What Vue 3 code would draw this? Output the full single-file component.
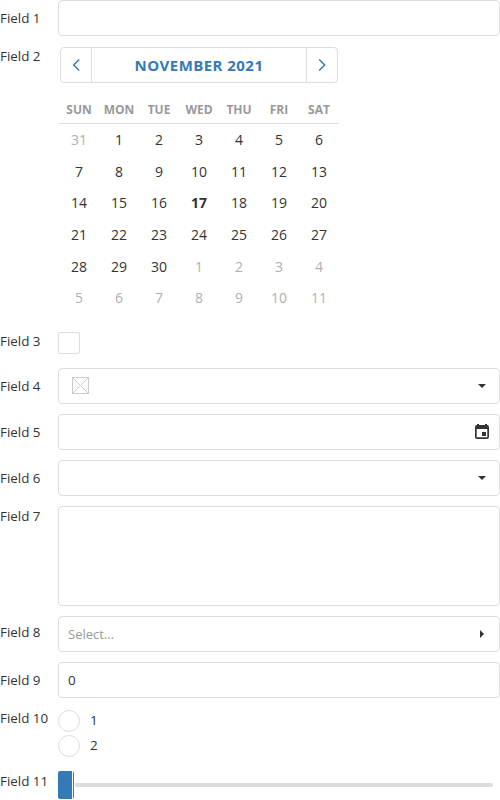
<script setup>
const weekdays = ['SUN', 'MON', 'TUE', 'WED', 'THU', 'FRI', 'SAT']
const days = [
  { n: 31, other: true },
  ...Array.from({ length: 30 }, (_, i) => ({ n: i + 1, other: false })),
  ...Array.from({ length: 11 }, (_, i) => ({ n: i + 1, other: true })),
]
</script>

<template>
  <form class="form" @submit.prevent>
    <div class="row">
      <label class="label">Field 1</label>
      <div class="box"></div>
    </div>

    <div class="row row-calendar">
      <label class="label">Field 2</label>
      <div class="calendar">
        <div class="nav">
          <button type="button" class="nav-button">
            <svg width="30" height="34" viewBox="0 0 30 34"><path d="M18.2 11.5 12.7 17l5.5 5.5" /></svg>
          </button>
          <div class="caption">NOVEMBER 2021</div>
          <button type="button" class="nav-button">
            <svg width="30" height="34" viewBox="0 0 30 34"><path d="M12.2 11.5l5.5 5.5-5.5 5.5" /></svg>
          </button>
        </div>
        <div class="weekdays">
          <span v-for="d in weekdays" :key="d">{{ d }}</span>
        </div>
        <div class="days">
          <span v-for="(d, i) in days" :key="i" :class="{ other: d.other, today: !d.other && d.n === 17 }">{{ d.n }}</span>
        </div>
      </div>
    </div>

    <div class="row row-check">
      <label class="label">Field 3</label>
      <div class="checkbox"></div>
    </div>

    <div class="row">
      <label class="label">Field 4</label>
      <div class="box">
        <svg class="no-color" width="17" height="17" viewBox="0 0 17 17"><path d="M1 1l15 15M16 1L1 16" /><rect x="0.5" y="0.5" width="16" height="16" /></svg>
        <svg class="arrow" width="10" height="6" viewBox="0 0 10 6"><path d="M1 1h8L5 5z" /></svg>
      </div>
    </div>

    <div class="row">
      <label class="label">Field 5</label>
      <div class="box box-date">
        <svg width="14" height="16" viewBox="0 0 14 16"><path fill-rule="evenodd" d="M2 0h2v1h6V0h2v1q2 0 2 2v10q0 2-2 2H2q-2 0-2-2V3q0-2 2-2zM1.7 5v8.3h10.6V5zM7 8h4v4H7z" /></svg>
      </div>
    </div>

    <div class="row">
      <label class="label">Field 6</label>
      <div class="box">
        <svg class="arrow" width="10" height="6" viewBox="0 0 10 6"><path d="M1 1h8L5 5z" /></svg>
      </div>
    </div>

    <div class="row row-area">
      <label class="label">Field 7</label>
      <div class="box"></div>
    </div>

    <div class="row row-lookup">
      <label class="label">Field 8</label>
      <div class="box">
        <span class="placeholder">Select...</span>
        <svg class="arrow arrow-right" width="6" height="10" viewBox="0 0 6 10"><path d="M1 1v8l4-4z" /></svg>
      </div>
    </div>

    <div class="row">
      <label class="label">Field 9</label>
      <div class="box"><span class="value">0</span></div>
    </div>

    <div class="row row-radio">
      <label class="label">Field 10</label>
      <div class="radios">
        <div v-for="n in 2" :key="n" class="radio"><i class="circle"></i><span class="value">{{ n }}</span></div>
      </div>
    </div>

    <div class="row row-slider">
      <label class="label">Field 11</label>
      <div class="slider">
        <div class="handle"></div>
        <div class="track"></div>
      </div>
    </div>
  </form>
</template>

<style>
body {
  background: #fff;
  overflow: hidden;
}
</style>

<style scoped>
.form {
  width: 500px;
  height: 800px;
  overflow: hidden;
  font: 13px/20px "Segoe UI", "Open Sans", "Noto Sans", sans-serif;
  color: #333;
}
.form * {
  box-sizing: border-box;
}
.row {
  display: flex;
  align-items: flex-start;
  height: 36px;
  margin-bottom: 10px;
}
.label {
  flex: 0 0 58px;
  padding-top: 8px;
  white-space: nowrap;
  font-size: 13.4px;
}
.value {
  font-size: 13.5px;
}
.box {
  flex: 1;
  display: flex;
  align-items: center;
  height: 100%;
  padding: 0 12px 0 9px;
  border: 1px solid #ddd;
  border-radius: 4px;
}
.row-calendar {
  height: 275px;
}
.row-calendar .label,
.row-area .label {
  padding-top: 0;
}
.calendar {
  width: 282px;
  padding-top: 1px;
}
.nav {
  display: flex;
  width: 278px;
  height: 36px;
  margin-left: 2px;
  border: 1px solid #ddd;
  border-radius: 4px;
}
.nav-button {
  width: 31px;
  padding: 0;
  border: 0;
  border-right: 1px solid #ddd;
  background: none;
}
.nav-button:last-child {
  border-right: 0;
  border-left: 1px solid #ddd;
}
.nav-button svg {
  display: block;
  fill: none;
  stroke: #337ab7;
  stroke-width: 1.5;
}
.caption {
  flex: 1;
  text-align: center;
  font-size: 15px;
  letter-spacing: 0.45px;
  font-weight: 700;
  line-height: 35px;
  color: #337ab7;
}
.weekdays {
  display: grid;
  grid-template-columns: repeat(7, 40px);
  width: 280px;
  margin-left: 1px;
  height: 41px;
  padding-top: 17px;
  border-bottom: 1px solid #ddd;
  text-align: center;
  font-size: 12px;
  font-weight: 700;
  color: #999;
}
.days {
  display: grid;
  grid-template-columns: repeat(7, 40px);
  grid-auto-rows: 31.67px;
  margin-left: 1px;
  text-align: center;
  font-size: 14px;
  line-height: 32px;
}
.other {
  color: #b0b0b0;
}
.today {
  font-weight: 700;
}
.row-check {
  height: 27px;
}
.row-check .label {
  padding-top: 0;
}
.checkbox {
  width: 22px;
  height: 22px;
  margin-top: 1px;
  border: 1px solid #ddd;
  border-radius: 2px;
}
.no-color {
  margin: 0 0 1px 4px;
  fill: none;
  stroke: #ccc;
}
.arrow {
  margin-left: auto;
  fill: #333;
}
.arrow-right {
  margin-right: 2px;
}
.box-date {
  justify-content: flex-end;
  padding-right: 10px;
}
.box-date svg {
  fill: #333;
}
.row-area {
  height: 100px;
}
.row-lookup .label {
  padding-top: 6px;
}
.placeholder {
  color: #999;
}
.row-radio {
  height: 53px;
}
.row-radio .label {
  padding-top: 0;
}
.radios {
  display: flex;
  flex-direction: column;
  gap: 3px;
  padding-top: 2px;
}
.radio {
  display: flex;
  height: 22px;
  gap: 10px;
}
.circle {
  width: 22px;
  height: 22px;
  border: 1px solid #ddd;
  border-radius: 50%;
}
.row-slider {
  height: 28px;
  margin-bottom: 0;
}
.row-slider .label {
  padding-top: 0;
}
.slider {
  flex: 1;
  display: flex;
  align-items: center;
  height: 28px;
  padding-right: 7px;
}
.handle {
  width: 16px;
  height: 28px;
  margin-right: 1px;
  border-radius: 2px;
  background: linear-gradient(to right, #337ab7 14px, #fff 14px, #fff 15px, #337ab7 15px);
}
.track {
  flex: 1;
  height: 4px;
  border-radius: 0 2px 2px 0;
  background: #ddd;
}
</style>
